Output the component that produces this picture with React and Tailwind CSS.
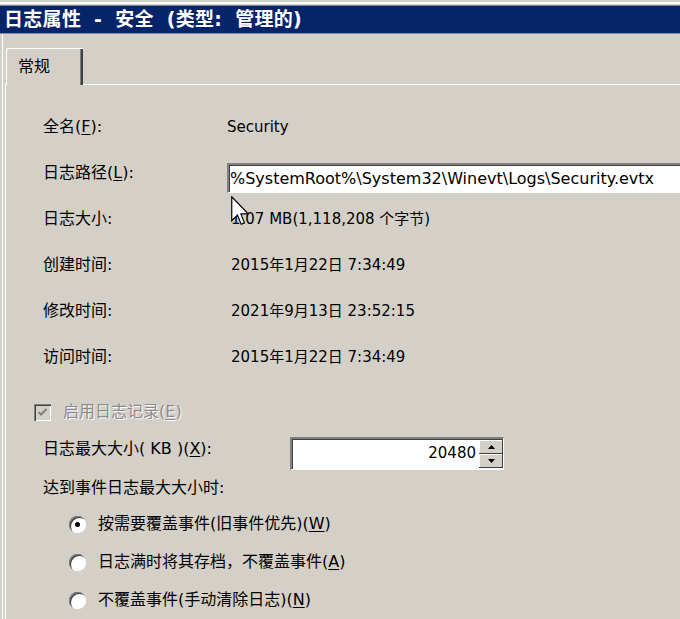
import React from 'react'

const cjk = { fontFamily: '"DejaVu Sans", "Noto Sans CJK SC", sans-serif' }

function Acc({ k }) {
  return (
    <>
      (<span className="underline underline-offset-2">{k}</span>)
    </>
  )
}

function InfoRow({ label, children }) {
  return (
    <div className="flex h-[46px] shrink-0 items-center">
      <div className="w-[184px] shrink-0 text-[16px]">{label}</div>
      <div className="flex-1 text-[15px]">{children}</div>
    </div>
  )
}

function Radio({ checked, children }) {
  return (
    <div className="flex h-[38px] items-center">
      <div className="relative ml-[26px] h-[17px] w-[17px] rounded-full bg-white shadow-[inset_1px_1px_0_#808080,inset_2px_2px_0_#404040,inset_-1px_-1px_0_#ffffff]">
        {checked && <div className="absolute left-[6px] top-[6px] h-[5px] w-[5px] rounded-full bg-black" />}
      </div>
      <div className="ml-[12px] text-[16px]">{children}</div>
    </div>
  )
}

function Cursor() {
  return (
    <svg className="absolute left-[231px] top-[196px]" width="18" height="30" viewBox="0 0 12 20">
      <path d="M0.5 0.5 L0.5 16.5 L4.3 12.7 L6.8 18.8 L9 17.9 L6.6 11.9 L11.5 11.9 Z" fill="#fff" stroke="#000" strokeWidth="0.8" strokeLinejoin="miter" />
    </svg>
  )
}

export default function App() {
  return (
    <div className="relative h-[619px] w-[680px] overflow-hidden bg-[#d4d0c8] text-black" style={cjk}>
      <div className="h-[2px] bg-[#d4d0c8]" />
      <div className="h-[2px] bg-white" />
      <div className="h-[1px] bg-[#d4d0c8]" />
      <div className="h-[1px] bg-[#808a9c]" />
      <div className="flex h-[27px] items-center bg-[#06246a] pl-[4px] text-[19px] font-bold tracking-[0.3px] text-white [word-spacing:6px]">
        日志属性 - 安全 (类型: 管理的)
      </div>
      <div className="h-[1px] bg-[#8890a8]" />

      <div className="ml-[2px] border-l border-white pl-[2px]">
        <div className="pt-[14px]">
          <div className="relative z-10 ml-[1px] flex h-[37px] w-[77px] items-center rounded-tl-[3px] border-l border-t border-white bg-[#d4d0c8] pl-[11px] text-[16px] shadow-[inset_-2px_0_0_#404040,inset_-3px_0_0_#808080]">
            常规
          </div>
        </div>
        <div className="-mt-px flex h-[600px] flex-col border-l border-t border-white pl-[37px] pt-[19px]">
          <InfoRow label={<>全名<Acc k="F" />:</>}>Security</InfoRow>
          <InfoRow label={<>日志路径<Acc k="L" />:</>}>
            <div className="-mr-[40px] mt-[10px] flex h-[30px] items-center border-l-2 border-t-2 border-b border-r border-l-[#808080] border-t-[#808080] border-b-white border-r-white bg-white pl-[1px] text-[16px] shadow-[inset_1px_1px_0_#404040]">
              %SystemRoot%\System32\Winevt\Logs\Security.evtx
            </div>
          </InfoRow>
          <InfoRow label="日志大小:"><span className="pl-[4px]">1.07 MB(1,118,208 个字节)</span></InfoRow>
          <InfoRow label="创建时间:"><span className="pl-[4px]">2015年1月22日 7:34:49</span></InfoRow>
          <InfoRow label="修改时间:"><span className="pl-[4px]">2021年9月13日 23:52:15</span></InfoRow>
          <InfoRow label="访问时间:"><span className="pl-[4px]">2015年1月22日 7:34:49</span></InfoRow>

          <div className="mt-[22px] flex h-[20px] shrink-0 items-center -ml-[9px]">
            <div className="relative h-[17px] w-[17px] bg-[#d4d0c8] shadow-[inset_1px_1px_0_#808080,inset_2px_2px_0_#404040,inset_-1px_-1px_0_#ffffff]">
              <svg className="absolute left-[3px] top-[3px]" width="11" height="11" viewBox="0 0 11 11">
                <path d="M1.5 5 L4 7.5 L9.5 2" fill="none" stroke="#808080" strokeWidth="2" />
              </svg>
            </div>
            <div className="ml-[12px] text-[16px] text-[#8a8a8a] [text-shadow:1px_1px_0_#ffffff]">
              启用日志记录<Acc k="E" />
            </div>
          </div>

          <div className="mt-[14px] flex h-[34px] shrink-0 items-center">
            <div className="-mt-[8px] w-[247px] shrink-0 text-[16px]">日志最大大小( KB )<Acc k="X" />:</div>
            <div className="flex h-[33px] w-[214px] border-l-2 border-t-2 border-b border-r border-l-[#808080] border-t-[#808080] border-b-white border-r-white bg-white shadow-[inset_1px_1px_0_#404040]">
              <div className="flex flex-1 items-center justify-end pr-[3px] text-[15px]">20480</div>
              <div className="my-[1px] flex w-[24px] flex-col">
                <div className="flex flex-1 items-center justify-center bg-[#d4d0c8] shadow-[inset_-1px_-1px_0_#404040,inset_1px_1px_0_#ffffff]">
                  <svg width="7" height="4" viewBox="0 0 7 4"><path d="M3.5 0 L7 4 L0 4 Z" fill="#000" /></svg>
                </div>
                <div className="flex flex-1 items-center justify-center bg-[#d4d0c8] shadow-[inset_-1px_-1px_0_#404040,inset_1px_1px_0_#ffffff]">
                  <svg width="7" height="4" viewBox="0 0 7 4"><path d="M0 0 L7 0 L3.5 4 Z" fill="#000" /></svg>
                </div>
              </div>
            </div>
          </div>

          <div className="mt-[6px] flex h-[24px] shrink-0 items-center text-[16px]">达到事件日志最大大小时:</div>

          <div className="mt-[5px] shrink-0">
            <Radio checked>按需要覆盖事件(旧事件优先)<Acc k="W" /></Radio>
            <Radio>日志满时将其存档，不覆盖事件<Acc k="A" /></Radio>
            <Radio>不覆盖事件(手动清除日志)<Acc k="N" /></Radio>
          </div>
        </div>
      </div>
      <Cursor />
    </div>
  )
}
